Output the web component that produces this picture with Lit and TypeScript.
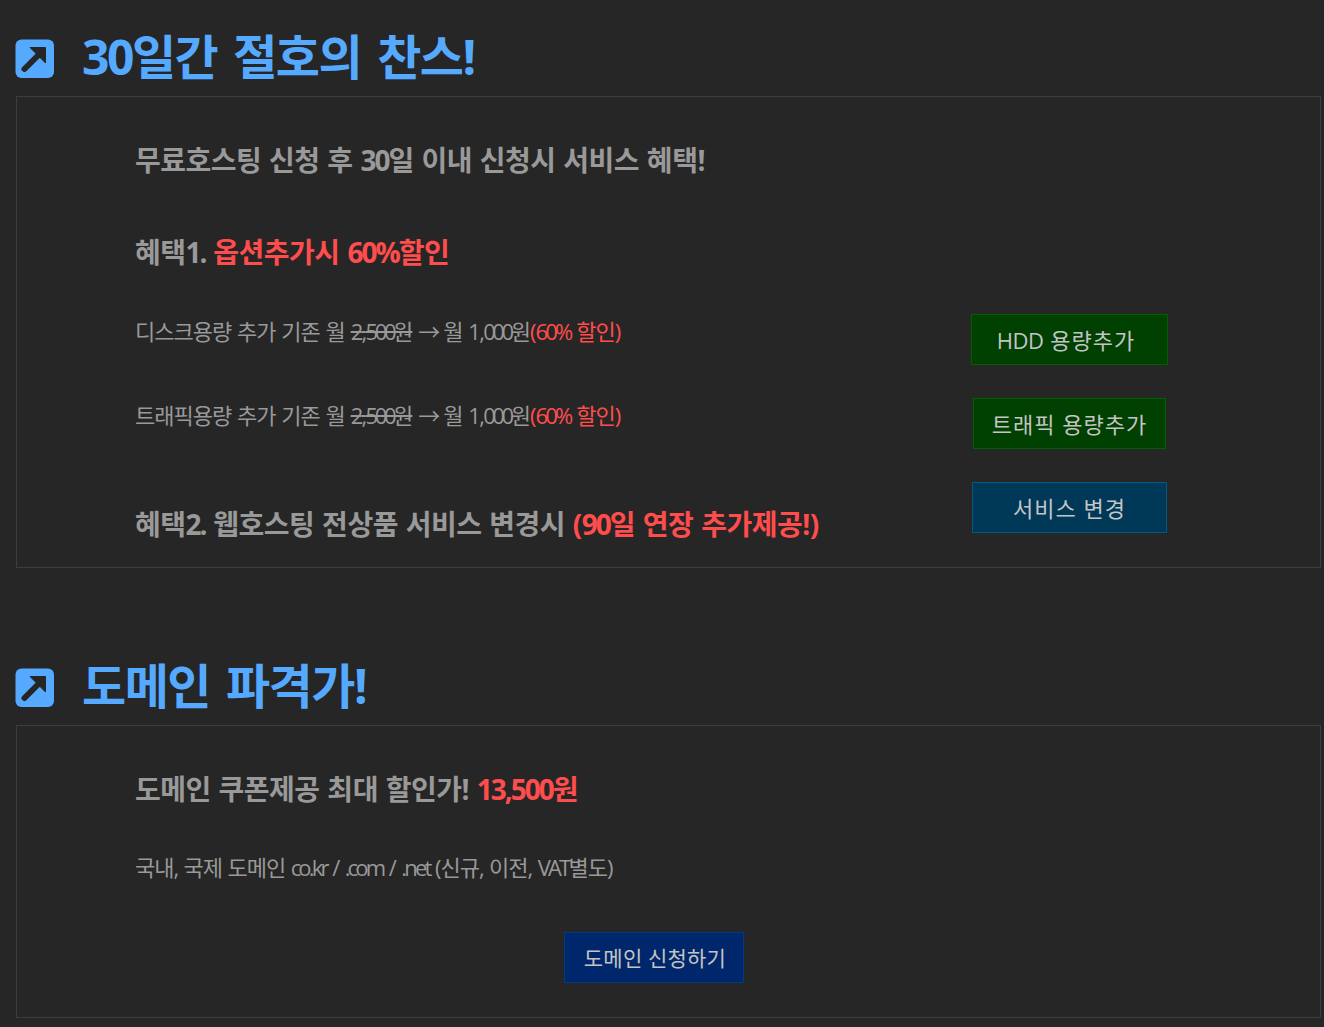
import { LitElement, html, css } from "lit";
import { customElement } from "lit/decorators.js";

const icon = html`<svg class="ico" viewBox="0 0 40 40" aria-hidden="true">
  <rect x="0.5" y="0.5" width="38.5" height="38.5" rx="6" fill="#55aaff"/>
  <path d="M9.5 30 L24 15.5" stroke="#262626" stroke-width="6" stroke-linecap="round" fill="none"/>
  <path d="M15 8.5 H30.5 V24 Z" fill="#262626" stroke="#262626" stroke-width="1" stroke-linejoin="round"/>
</svg>`;

const num = (t: string) => html`<span class="num">${t}</span>`;
const money = (a: string, b: string) =>
  html`<span class="lead-digit">${a},</span><span class="num tight">${b}</span>`;

@customElement("app-root")
export class AppRoot extends LitElement {
  static styles = css`
    :host {
      display: block;
      height: 1027px;
      overflow: hidden;
      background: #262626;
      font-family: "Open Sans", "Noto Sans CJK KR", sans-serif;
      color: #999;
    }
    section { display: block; }
    .heading {
      display: flex;
      align-items: center;
      height: 60px;
      margin: 0;
      padding-left: 15px;
      gap: 27px;
      color: #55aaff;
      font-size: 48px;
      font-weight: 700;
      letter-spacing: -1.5px;
      word-spacing: 5px;
      line-height: 56px;
    }
    .heading .num { letter-spacing: -2.5px; }
    .ico { width: 40px; height: 40px; flex: none; margin-top: 4px; }
    .first { padding-top: 27px; }
    .second { padding-top: 88px; }
    .box {
      margin: 9px 3px 0 16px;
      border: 1px solid #3d3d3d;
      padding-left: 118px;
    }
    .lead {
      font-size: 28px;
      font-weight: 700;
      letter-spacing: -0.5px;
      word-spacing: 1px;
      line-height: 34px;
    }
    .lead .num { letter-spacing: -2px; }
    .top { padding-top: 46px; }
    .lead2 { padding-top: 58px; }
    .red { color: #ff4d4d; }
    .row {
      display: grid;
      grid-template-columns: 837px 195px;
      align-items: start;
      padding-top: 33px;
    }
    .row.start { padding-top: 45px; }
    .row.end { padding-bottom: 34px; }
    .small {
      font-size: 22px;
      letter-spacing: -1px;
      word-spacing: 1.1px;
      line-height: 30px;
    }
    .small .num { letter-spacing: -2.8px; }
    .small .lead-digit { letter-spacing: -1.7px; }
    .small .num.tight { letter-spacing: -3.4px; }
    .nudge { padding-top: 2px; }
    .service { padding-top: 25px; height: 26px; }
    .domain { padding-top: 46px; word-spacing: 0.7px; }
    .actions { display: flex; justify-content: center; }
    .domain-action { margin: 50px 0 34px -118px; padding-right: 30px; }
    .btn {
      box-sizing: border-box;
      height: 51px;
      border: 1px solid;
      border-radius: 0;
      padding: 0;
      font: inherit;
      font-size: 22px;
      letter-spacing: 1px;
      line-height: 48px;
      color: #c4c4c4;
      white-space: nowrap;
      flex: none;
    }
    .btn .num { letter-spacing: -0.5px; }
    .w197 { width: 197px; padding-right: 7px; }
    .w193 { width: 193px; }
    .w195 { width: 195px; }
    .green { background: #004000; border-color: #006000; }
    .teal { background: #003858; border-color: #005a88; }
    .navy { width: 180px; padding-left: 3px; font-size: 21px; letter-spacing: 0.2px; background: #00266b; border-color: #003c80; }
  `;

  render() {
    return html`
      <section class="first">
        <h2 class="heading">${icon}<span>${num("30")}일간 절호의 찬스!</span></h2>
        <div class="box">
          <div class="lead top">무료호스팅 신청 후 ${num("30")}일 이내 신청시 서비스 혜택!</div>
          <div class="lead lead2">혜택${num("1.")} <span class="red">옵션추가시 ${num("60%")}할인</span></div>
          <div class="row start">
            <div class="small nudge">디스크용량 추가 기존 월 <s>${money("2", "500")}원</s> ${num("→")} 월 ${money("1", "000")}원<span class="red">(${num("60%")} 할인)</span></div>
            <div class="actions"><button class="btn green w197">${num("HDD")} 용량추가</button></div>
          </div>
          <div class="row">
            <div class="small nudge">트래픽용량 추가 기존 월 <s>${money("2", "500")}원</s> ${num("→")} 월 ${money("1", "000")}원<span class="red">(${num("60%")} 할인)</span></div>
            <div class="actions"><button class="btn green w193">트래픽 용량추가</button></div>
          </div>
          <div class="row end">
            <div class="lead service">혜택${num("2.")} 웹호스팅 전상품 서비스 변경시 <span class="red">(${num("90")}일 연장 추가제공!)</span></div>
            <div class="actions"><button class="btn teal w195">서비스 변경</button></div>
          </div>
        </div>
      </section>
      <section class="second">
        <h2 class="heading">${icon}<span>도메인 파격가!</span></h2>
        <div class="box">
          <div class="lead top">도메인 쿠폰제공 최대 할인가! <span class="red">${num("13,500")}원</span></div>
          <div class="small domain">국내, 국제 도메인 ${num("co.kr")} / ${num(".com")} / ${num(".net")} (신규, 이전, ${num("VAT")}별도)</div>
          <div class="actions domain-action"><button class="btn navy">도메인 신청하기</button></div>
        </div>
      </section>
    `;
  }
}
